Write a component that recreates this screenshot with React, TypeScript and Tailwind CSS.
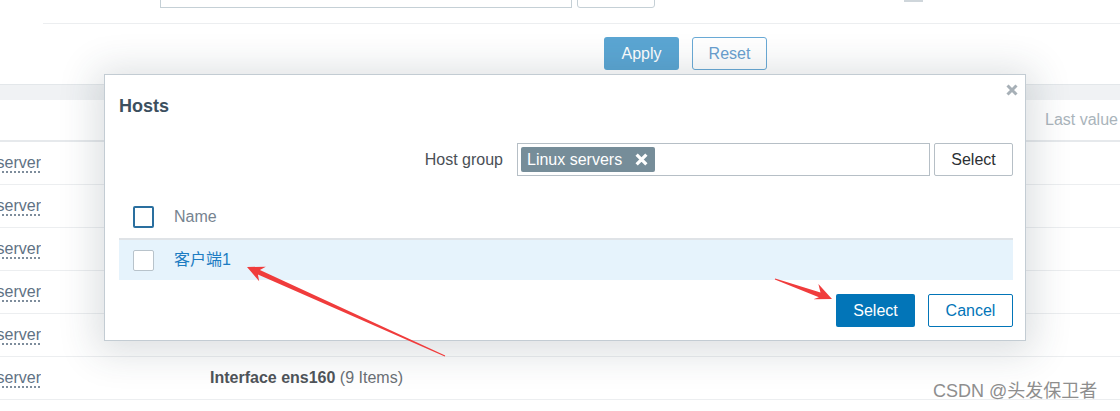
import React from "react";

const font = { fontFamily: '"Liberation Sans", Arial, "Noto Sans CJK SC", sans-serif' };

function BgRow({ children }: { children?: React.ReactNode }) {
  return (
    <div className="flex h-[43px] items-center border-b border-[#eceef0]">
      <div className="flex w-[41px] justify-end overflow-hidden whitespace-nowrap">
        <span className="text-[16px] leading-[20px] text-[#5f7284] underline decoration-dotted underline-offset-[4px]">
          Linux server
        </span>
      </div>
      {children}
    </div>
  );
}

export default function App() {
  return (
    <div className="relative h-[411px] w-[1120px] overflow-hidden bg-white" style={font}>
      {/* background page */}
      <div className="h-[84px]">
        <div className="flex h-[23px] items-start">
          <div className="-mt-[23px] ml-[160px] h-[31px] w-[412px] border border-[#c5d0d6] bg-white" />
          <div className="-mt-[23px] ml-[5px] h-[31px] w-[78px] rounded-[3px] border border-[#c5d0d6] bg-white" />
          <div className="ml-[249px] h-[2px] w-[19px] bg-[#cfd6db]" />
        </div>
        <div className="ml-[43px] border-t border-[#eceef0]" />
        <div className="mt-[13px] flex">
          <div className="ml-[604px] flex h-[33px] w-[75px] items-center justify-center rounded-[3px] bg-[#5ba6d3] text-[16px] text-white">
            Apply
          </div>
          <div className="ml-[13px] flex h-[33px] w-[75px] items-center justify-center rounded-[3px] border border-[#6aaad6] bg-white text-[16px] text-[#6a9fcf]">
            Reset
          </div>
        </div>
      </div>
      <div className="h-[16px] border-t border-[#e3e7ea] bg-[#f0f2f4]" />
      <div className="flex h-[42px] items-center border-b-2 border-[#e6e9ec]">
        <span className="ml-[1045px] whitespace-nowrap text-[16px] text-[#aab4bb]">Last value</span>
      </div>
      <BgRow />
      <BgRow />
      <BgRow />
      <BgRow />
      <BgRow />
      <BgRow>
        <span className="ml-[169px] whitespace-nowrap text-[16px] text-[#6b7075]">
          <span className="font-bold text-[#4f5459]">Interface ens160</span> (9 Items)
        </span>
      </BgRow>

      {/* dialog */}
      <div className="absolute left-[104px] top-[74px] h-[267px] w-[922px] border border-[#c3ccd3] bg-white pl-[14px] pr-[12px] shadow-[0_4px_36px_8px_rgba(40,55,70,0.16)]">
        <svg className="absolute left-[901px] top-[9px]" width="12" height="12" viewBox="0 0 12 12">
          <path d="M1.5 1.5 L10.5 10.5 M10.5 1.5 L1.5 10.5" stroke="#a7b0b7" strokeWidth="3" strokeLinecap="butt" />
        </svg>
        <div className="pt-[21px] text-[18px] font-bold leading-[20px] text-[#3c4f5e]">Hosts</div>
        <div className="mt-[27px] flex h-[33px] items-center justify-end">
          <span className="text-[16px] text-[#4a5056]">Host group</span>
          <div className="ml-[14px] flex h-[33px] w-[413px] items-center border border-[#b6bfc6] bg-white pl-[3px]">
            <div className="flex h-[25px] items-center rounded-[2px] bg-[#768d99] pl-[6px] pr-[7px] text-[16px] text-white">
              <span>Linux servers</span>
              <svg className="ml-[13px]" width="13" height="13" viewBox="0 0 12 12">
                <path d="M1.5 1.5 L10.5 10.5 M10.5 1.5 L1.5 10.5" stroke="#ffffff" strokeWidth="3" />
              </svg>
            </div>
          </div>
          <div className="ml-[4px] flex h-[33px] w-[79px] items-center justify-center rounded-[2px] border border-[#b6bfc6] bg-white text-[16px] text-[#2b2f33]">
            Select
          </div>
        </div>
        <div className="mt-[19px] flex h-[45px] items-center border-b-2 border-[#dfe3e7] pl-[14px]">
          <div className="h-[22px] w-[21px] rounded-[2px] border-2 border-[#2a6f9f] bg-white" />
          <span className="ml-[20px] text-[16px] text-[#768390]">Name</span>
        </div>
        <div className="flex h-[40px] items-center bg-[#e6f3fc] pl-[14px]">
          <div className="h-[21px] w-[21px] rounded-[2px] border border-[#b8c3cb] bg-white" />
          <span className="ml-[20px] text-[16px] text-[#1d7cc2]">客户端1</span>
        </div>
        <div className="mt-[14px] flex justify-end">
          <div className="flex h-[33px] w-[79px] items-center justify-center rounded-[2px] bg-[#0275b8] text-[16px] text-white">
            Select
          </div>
          <div className="ml-[13px] flex h-[33px] w-[85px] items-center justify-center rounded-[2px] border border-[#0275b8] bg-white text-[16px] text-[#0275b8]">
            Cancel
          </div>
        </div>
      </div>

      {/* arrows */}
      <svg className="pointer-events-none absolute left-0 top-0" width="1120" height="411" viewBox="0 0 1120 411">
        <polygon
          points="445.2,355.5 259.9,270.0 265.8,266.7 247,267 259.2,281.3 257.9,274.6 444.8,356.5"
          fill="#f03c3c"
        />
        <polygon
          points="775.2,278.5 820.5,292.5 818.4,284.0 832,299 813.4,299.2 818.9,297.3 774.8,279.5"
          fill="#f03c3c"
        />
      </svg>

      {/* watermark */}
      <div className="absolute left-[933px] top-[380px] whitespace-nowrap text-[18px] leading-[22px] text-[#8e8e8e]">
        CSDN @头发保卫者
      </div>
    </div>
  );
}
